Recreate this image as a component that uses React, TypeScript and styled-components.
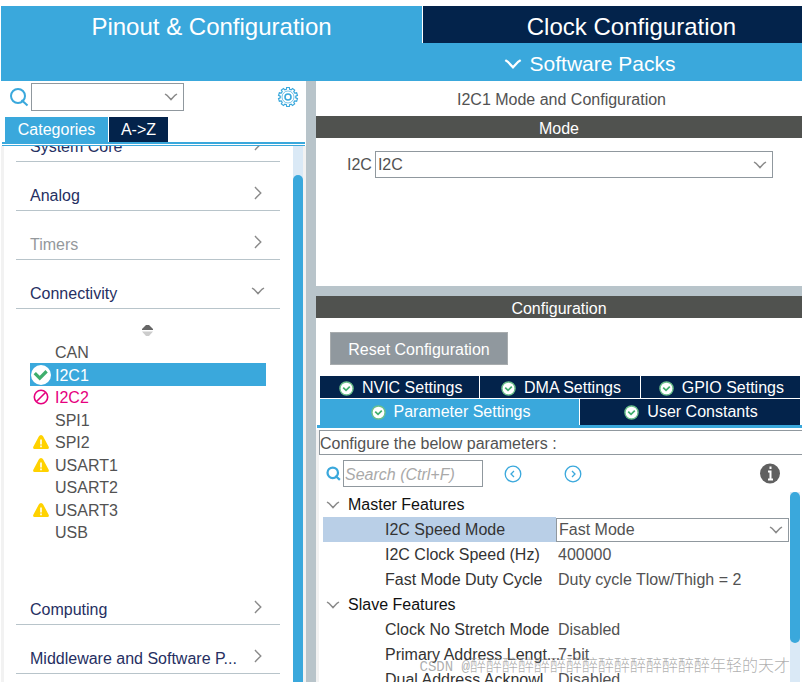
import React from 'react';
import styled, { createGlobalStyle } from 'styled-components';

const blue = '#3aa8dc';
const navy = '#03234b';
const slate = '#b8c4ca';
const line = '#90989e';

const GlobalStyle = createGlobalStyle`
  * { box-sizing: border-box; }
  body { margin: 0; background: #fff; font-family: "Liberation Sans", Arial, sans-serif; font-size: 16px; color: #525252; }
  button, input, select { font: inherit; color: inherit; margin: 0; padding: 0; border: 0; border-radius: 0; background: none; }
  h1, h2 { margin: 0; padding: 0; font: inherit; }
`;

const Page = styled.div`
  display: flex;
  flex-direction: column;
  height: 100vh;
  padding: 6px 0 0 1px;
  overflow: hidden;
  position: relative;
`;
const MainTabs = styled.nav`
  display: grid;
  grid-template-columns: 421fr 379fr;
  gap: 1px;
  height: 37px;
  flex: none;
`;
const MainTab = styled.button<{ $active?: boolean }>`
  background: ${p => (p.$active ? blue : navy)};
  color: #fff;
  font-size: 24px;
  line-height: 34px;
  padding: 4px 0;
  padding-left: ${p => (p.$active ? '0' : '38px')};
`;
const PacksBar = styled.div`
  display: flex;
  height: 38px;
  flex: none;
  justify-content: center;
  background: ${blue};
  color: #fff;
`;
const PacksButton = styled.button`
  display: flex;
  align-items: center;
  gap: 8px;
  margin-left: 376px;
  padding-top: 3px;
  font-size: 21px;
`;
const Body = styled.div`
  display: flex;
  flex: 1;
  min-height: 0;
`;
const Sidebar = styled.aside`
  display: flex;
  flex-direction: column;
  width: 305px;
  flex: none;
`;
const FilterRow = styled.div`
  display: flex;
  align-items: center;
  height: 32px;
  padding: 0 7px 0 8px;
  gap: 2px;
  flex: none;
`;
const SelectWrap = styled.span<{ $width?: string; $height: string }>`
  display: grid;
  align-items: center;
  width: ${p => p.$width || 'auto'};
  height: ${p => p.$height};
  flex: ${p => (p.$width ? 'none' : '1')};
  border: 1px solid ${line};
  background: #fff;
  > * { grid-area: 1 / 1; }
  > svg { justify-self: end; margin-right: 5px; pointer-events: none; }
`;
const Select = styled.select`
  appearance: none;
  width: 100%;
  height: 100%;
  padding-left: 2px;
  outline: none;
`;
const IconButton = styled.button<{ $push?: boolean }>`
  display: flex;
  margin-left: ${p => (p.$push ? 'auto' : '0')};
`;
const ListTabs = styled.div`
  display: flex;
  gap: 1px;
  height: 29px;
  flex: none;
  padding: 4px 0 0 4px;
`;
const ListTab = styled.button<{ $active?: boolean }>`
  width: ${p => (p.$active ? '103px' : '59px')};
  background: ${p => (p.$active ? blue : navy)};
  color: #fff;
`;
const DoubleRule = styled.div`
  height: 4px;
  flex: none;
  margin: 0 1px;
  border-top: 2px solid ${blue};
  border-bottom: 1px solid ${blue};
`;
const ListArea = styled.div`
  display: flex;
  flex: 1;
  min-height: 0;
  border-left: 3px solid #f2f2f2;
`;
const ListView = styled.div`
  display: flex;
  flex: 1;
  min-height: 0;
  flex-direction: column;
  overflow: hidden;
  padding: 0 13px 0 12px;
`;
const Category = styled.button<{ $muted?: boolean; $cut?: boolean }>`
  display: flex;
  flex: none;
  justify-content: space-between;
  align-items: flex-end;
  width: 100%;
  height: 49px;
  margin-top: ${p => (p.$cut ? '-33px' : '0')};
  padding: 0 15px 5px 14px;
  border-bottom: 1px solid ${slate};
  color: ${p => (p.$muted ? '#94989c' : '#262f62')};
  svg { margin-bottom: 5px; }
`;
const Periphs = styled.div`
  display: flex;
  flex-direction: column;
  flex: none;
  height: 267px;
  padding: 15px 14px 0;
  > svg { margin: 0 0 4px 112px; flex: none; }
`;
const Periph = styled.button<{ $tone?: 'selected' | 'conflict' }>`
  display: grid;
  grid-template-columns: 22px auto;
  grid-template-rows: 100%;
  gap: 3px;
  align-items: center;
  text-align: left;
  height: 22px;
  line-height: 22px;
  &:nth-of-type(even) { height: 23px; }
  width: 100%;
  flex: none;
  background: ${p => (p.$tone === 'selected' ? blue : 'none')};
  color: ${p => (p.$tone === 'selected' ? '#fff' : p.$tone === 'conflict' ? '#e6007e' : '#525252')};
  svg { justify-self: center; }
`;
const PeriphName = styled.span`
  padding-top: 2px;
`;
const Track = styled.div`
  width: 10px;
  flex: none;
  background: #dae9f6;
`;
const Thumb = styled.div<{ $top: number; $height: string }>`
  margin-top: ${p => p.$top}px;
  height: ${p => p.$height};
  border-radius: 5px;
  background: ${blue};
`;
const Edge = styled.div`
  width: 3px;
  background: #f2f2f2;
`;
const Splitter = styled.div<{ $vertical?: boolean }>`
  flex: none;
  width: ${p => (p.$vertical ? '10px' : 'auto')};
  height: ${p => (p.$vertical ? 'auto' : '10px')};
  background: ${slate};
`;
const Main = styled.main`
  display: flex;
  flex-direction: column;
  flex: 1;
  min-width: 0;
`;
const Title = styled.h1`
  flex: none;
  text-align: center;
  height: 35px;
  line-height: 37px;
  padding-left: 5px;
`;
const Bar = styled.h2`
  flex: none;
  text-align: center;
  height: 22px;
  line-height: 25px;
  background: #50524f;
  color: #fff;
`;
const ModePanel = styled.section`
  flex: none;
  height: 148px;
  padding: 13px 29px 0 31px;
`;
const Field = styled.label`
  display: flex;
  align-items: center;
  gap: 3px;
`;
const Actions = styled.div`
  flex: none;
  padding: 14px 14px 11px;
`;
const ResetButton = styled.button`
  display: block;
  width: 178px;
  height: 33px;
  padding-top: 2px;
  border: 1px solid #a8acae;
  background: #90989e;
  color: #fff;
`;
const TabRow = styled.div<{ $columns: string }>`
  display: grid;
  flex: none;
  grid-template-columns: ${p => p.$columns};
  gap: 1px;
  padding: 0 2px 0 4px;
  margin-bottom: 1px;
`;
const ConfigTab = styled.button<{ $active?: boolean; $lower?: boolean }>`
  display: flex;
  align-items: center;
  justify-content: center;
  gap: 8px;
  height: ${p => (p.$lower ? '26px' : '22px')};
  padding-top: ${p => (p.$lower ? '0' : '2px')};
  padding-left: 2px;
  color: #fff;
  background: ${p => (p.$active ? blue : navy)};
`;
const ActiveRule = styled.div`
  flex: none;
  height: 3px;
  margin: -1px 0 2px 1px;
  background: ${blue};
`;
const Params = styled.section`
  display: flex;
  flex: 1;
  min-height: 0;
  flex-direction: column;
  border-left: 3px solid #f2f2f2;
`;
const Hint = styled.div`
  flex: none;
  height: 25px;
  line-height: 25px;
  border: 1px solid ${line};
  border-right: 0;
`;
const SearchRow = styled.div`
  display: flex;
  flex: none;
  align-items: center;
  height: 37px;
  padding: 0 22px 0 7px;
`;
const SearchInput = styled.input`
  width: 140px;
  height: 27px;
  margin: 0 21px 0 2px;
  border: 1px solid ${line};
  padding: 2px 0 0 1px;
  font-style: italic;
  &::placeholder { color: #a9a9a9; opacity: 1; }
`;
const Steps = styled.div`
  display: flex;
  gap: 42px;
`;
const TableArea = styled.div`
  display: flex;
  flex: 1;
  min-height: 0;
  overflow: hidden;
  padding-right: 2px;
`;
const TableView = styled.div`
  flex: 1;
  overflow: hidden;
  padding: 0 1px 0 4px;
`;
const Table = styled.table`
  width: 100%;
  border-collapse: collapse;
  table-layout: fixed;
  td, th { height: 25px; padding: 0; font-weight: 400; text-align: left; white-space: nowrap; }
`;
const NameCell = styled.th<{ $selected?: boolean }>`
  color: #333;
  background: ${p => (p.$selected ? '#b9cfe7' : 'none')};
  && { padding-left: 62px; }
`;
const GroupButton = styled.button`
  display: flex;
  align-items: center;
  gap: 8px;
  padding-left: 3px;
  color: #111;
`;
const Value = styled.span`
  padding-left: 2px;
`;
const Watermark = styled.div`
  position: absolute;
  right: 12px;
  bottom: 4px;
  font: 16px/22px "Noto Sans CJK SC", sans-serif;
  font-weight: 300;
  color: rgba(140, 140, 140, 0.7);
  pointer-events: none;
  white-space: pre;
`;
const WatermarkSite = styled.span`
  font: 14px/22px "Liberation Mono", monospace;
`;

const Chevron = ({ dir = 'down', size = 14, color = '#8a8a8a', weight = 1.4 }: { dir?: 'down' | 'right'; size?: number; color?: string; weight?: number }) => (
  <svg width={size} height={size} viewBox="0 0 14 14" fill="none" stroke={color} strokeWidth={weight}>
    <path d={dir === 'down' ? 'M1 4 L3 5.3 L7 9.6 L11 5.3 L13 4' : 'M4 1 L5.3 2.5 L9.8 7 L5.3 11.5 L4 13'} />
  </svg>
);
const SearchIcon = ({ size = 20, weight = 2 }: { size?: number; weight?: number }) => (
  <svg width={size} height={size} viewBox="0 0 20 20" fill="none" stroke={blue} strokeWidth={weight}>
    <circle cx="9" cy="9" r="7" />
    <path d="M12.5 13 L18.5 18.5" />
  </svg>
);
const gearOutline = Array.from({ length: 10 }, (_, i) => {
  const at = (deg: number, r: number) => {
    const a = ((i * 36 + deg) * Math.PI) / 180;
    return `${(11 + r * Math.sin(a)).toFixed(2)} ${(11 - r * Math.cos(a)).toFixed(2)}`;
  };
  return `${i ? 'L' : 'M'}${at(-8, 9.6)} L${at(8, 9.6)} L${at(12, 7.8)} L${at(24, 7.8)}`;
}).join(' ');
const GearIcon = () => (
  <svg width="22" height="22" viewBox="0 0 22 22" fill="none" stroke={blue} strokeWidth="1.2">
    <path d={`${gearOutline} Z`} />
    <circle cx="11" cy="11" r="6" strokeWidth="0.7" />
    <circle cx="11" cy="11" r="3" strokeWidth="1.6" />
  </svg>
);
const CheckIcon = ({ size = 15, plain }: { size?: number; plain?: boolean }) => (
  <svg width={size} height={size} viewBox="0 0 16 16" fill="none">
    <circle cx="8" cy="8" r={plain ? 8 : 7} fill="#fff" stroke={plain ? 'none' : '#6cc08c'} strokeWidth="1.5" />
    <path d={plain ? 'M3 6.5 L7 10.5 L12.5 5' : 'M4.5 7 L7.5 10 L11.5 6'} stroke="#3fae6c" strokeWidth={plain ? 2.6 : 1.8} />
  </svg>
);
const BlockedIcon = () => (
  <svg width="16" height="16" viewBox="0 0 16 16" fill="none" stroke="#e6007e" strokeWidth="1.6">
    <circle cx="8" cy="8" r="6.7" />
    <path d="M3.5 12.5 L12.5 3.5" />
  </svg>
);
const WarningIcon = () => (
  <svg width="16" height="14" viewBox="0 0 16 14">
    <path d="M8 0 Q9.5 0 10.2 1.5 L15.8 12 Q16.2 14 14.5 14 H1.5 Q-.2 14 .2 12 L5.8 1.5 Q6.5 0 8 0Z" fill="#ffd200" />
    <path d="M8 4.5 V9.5 M8 10.5 V12.2" stroke="#fff" strokeWidth="1.6" />
  </svg>
);
const SortIcon = () => (
  <svg width="11" height="13" viewBox="0 0 11 13">
    <path d="M0 6 V5 L4 1 H7 L11 5 V6Z" fill="#666" />
    <path d="M0 7.5 H11 L7 12 H4Z" fill="#ccc" />
  </svg>
);
const StepIcon = ({ dir }: { dir: 'prev' | 'next' }) => (
  <svg width="18" height="18" viewBox="0 0 18 18" fill="none" stroke={blue} strokeWidth="1.3">
    <circle cx="9" cy="9" r="7.8" />
    <path d={dir === 'prev' ? 'M10 6 L7 9 L10 12' : 'M8 6 L11 9 L8 12'} />
  </svg>
);
const InfoIcon = () => (
  <svg width="20" height="21" viewBox="0 0 20 21">
    <circle cx="10" cy="10.5" r="10" fill="#606060" />
    <path d="M10.5 3.5 V6 M8 8.5 H10.5 V16 M8 16.5 H13" stroke="#fff" strokeWidth="2" fill="none" />
  </svg>
);

type PeriphItem = { name: string; state?: 'selected' | 'conflict' | 'warning' };
const periphs: PeriphItem[] = [
  { name: 'CAN' },
  { name: 'I2C1', state: 'selected' },
  { name: 'I2C2', state: 'conflict' },
  { name: 'SPI1' },
  { name: 'SPI2', state: 'warning' },
  { name: 'USART1', state: 'warning' },
  { name: 'USART2' },
  { name: 'USART3', state: 'warning' },
  { name: 'USB' },
];

const periphIcon = (state?: PeriphItem['state']) => {
  if (state === 'selected') return <CheckIcon size={20} plain />;
  if (state === 'conflict') return <BlockedIcon />;
  if (state === 'warning') return <WarningIcon />;
  return <span />;
};

const groups = [
  {
    title: 'Master Features',
    rows: [
      ['I2C Speed Mode', 'Fast Mode'],
      ['I2C Clock Speed (Hz)', '400000'],
      ['Fast Mode Duty Cycle', 'Duty cycle Tlow/Thigh = 2'],
    ],
  },
  {
    title: 'Slave Features',
    rows: [
      ['Clock No Stretch Mode', 'Disabled'],
      ['Primary Address Lengt...', '7-bit'],
      ['Dual Address Acknowl...', 'Disabled'],
    ],
  },
];

export default function App() {
  return (
    <Page>
      <GlobalStyle />
      <MainTabs>
        <MainTab $active>Pinout &amp; Configuration</MainTab>
        <MainTab>Clock Configuration</MainTab>
      </MainTabs>
      <PacksBar>
        <PacksButton><Chevron size={18} color="#fff" weight={1.8} />Software Packs</PacksButton>
      </PacksBar>
      <Body>
        <Sidebar>
          <FilterRow>
            <SearchIcon />
            <SelectWrap $width="153px" $height="28px">
              <Select aria-label="Search peripherals"><option /></Select>
              <Chevron />
            </SelectWrap>
            <IconButton $push aria-label="Settings"><GearIcon /></IconButton>
          </FilterRow>
          <ListTabs>
            <ListTab $active>Categories</ListTab>
            <ListTab>A-&gt;Z</ListTab>
          </ListTabs>
          <DoubleRule />
          <ListArea>
            <ListView>
              <Category $cut>System Core<Chevron dir="right" /></Category>
              <Category>Analog<Chevron dir="right" /></Category>
              <Category $muted>Timers<Chevron dir="right" /></Category>
              <Category>Connectivity<Chevron /></Category>
              <Periphs>
                <SortIcon />
                {periphs.map(p => (
                  <Periph key={p.name} $tone={p.state === 'warning' ? undefined : p.state}>
                    {periphIcon(p.state)}
                    <PeriphName>{p.name}</PeriphName>
                  </Periph>
                ))}
              </Periphs>
              <Category>Computing<Chevron dir="right" /></Category>
              <Category>Middleware and Software P...<Chevron dir="right" /></Category>
            </ListView>
            <Track><Thumb $top={29} $height="100%" /></Track>
            <Edge />
          </ListArea>
        </Sidebar>
        <Splitter $vertical />
        <Main>
          <Title>I2C1 Mode and Configuration</Title>
          <Bar>Mode</Bar>
          <ModePanel>
            <Field>
              I2C
              <SelectWrap $height="27px">
                <Select><option>I2C</option></Select>
                <Chevron />
              </SelectWrap>
            </Field>
          </ModePanel>
          <Splitter />
          <Bar>Configuration</Bar>
          <Actions><ResetButton>Reset Configuration</ResetButton></Actions>
          <TabRow $columns="1fr 1fr 1fr">
            <ConfigTab><CheckIcon />NVIC Settings</ConfigTab>
            <ConfigTab><CheckIcon />DMA Settings</ConfigTab>
            <ConfigTab><CheckIcon />GPIO Settings</ConfigTab>
          </TabRow>
          <TabRow $columns="259fr 220fr">
            <ConfigTab $active $lower><CheckIcon />Parameter Settings</ConfigTab>
            <ConfigTab $lower><CheckIcon />User Constants</ConfigTab>
          </TabRow>
          <ActiveRule />
          <Params>
            <Hint>Configure the below parameters :</Hint>
            <SearchRow>
              <SearchIcon size={15} weight={3} />
              <SearchInput aria-label="Search parameters" placeholder="Search (Ctrl+F)" />
              <Steps>
                <IconButton aria-label="Previous"><StepIcon dir="prev" /></IconButton>
                <IconButton aria-label="Next"><StepIcon dir="next" /></IconButton>
              </Steps>
              <IconButton $push aria-label="Information"><InfoIcon /></IconButton>
            </SearchRow>
            <TableArea>
              <TableView>
                <Table>
                  <tbody>
                    {groups.map(g => (
                      <React.Fragment key={g.title}>
                        <tr><td colSpan={2}><GroupButton><Chevron />{g.title}</GroupButton></td></tr>
                        {g.rows.map(([name, value]) => (
                          <tr key={name}>
                            <NameCell scope="row" $selected={value === 'Fast Mode'}>{name}</NameCell>
                            <td>
                              {value === 'Fast Mode' ? (
                                <SelectWrap $height="24px">
                                  <Select aria-label={name}><option>{value}</option></Select>
                                  <Chevron />
                                </SelectWrap>
                              ) : <Value>{value}</Value>}
                            </td>
                          </tr>
                        ))}
                      </React.Fragment>
                    ))}
                  </tbody>
                </Table>
              </TableView>
              <Track><Thumb $top={0} $height="151px" /></Track>
            </TableArea>
          </Params>
        </Main>
      </Body>
      <Watermark><WatermarkSite>CSDN @</WatermarkSite>醉醉醉醉醉醉醉醉醉醉醉醉醉醉醉年轻的天才</Watermark>
    </Page>
  );
}
